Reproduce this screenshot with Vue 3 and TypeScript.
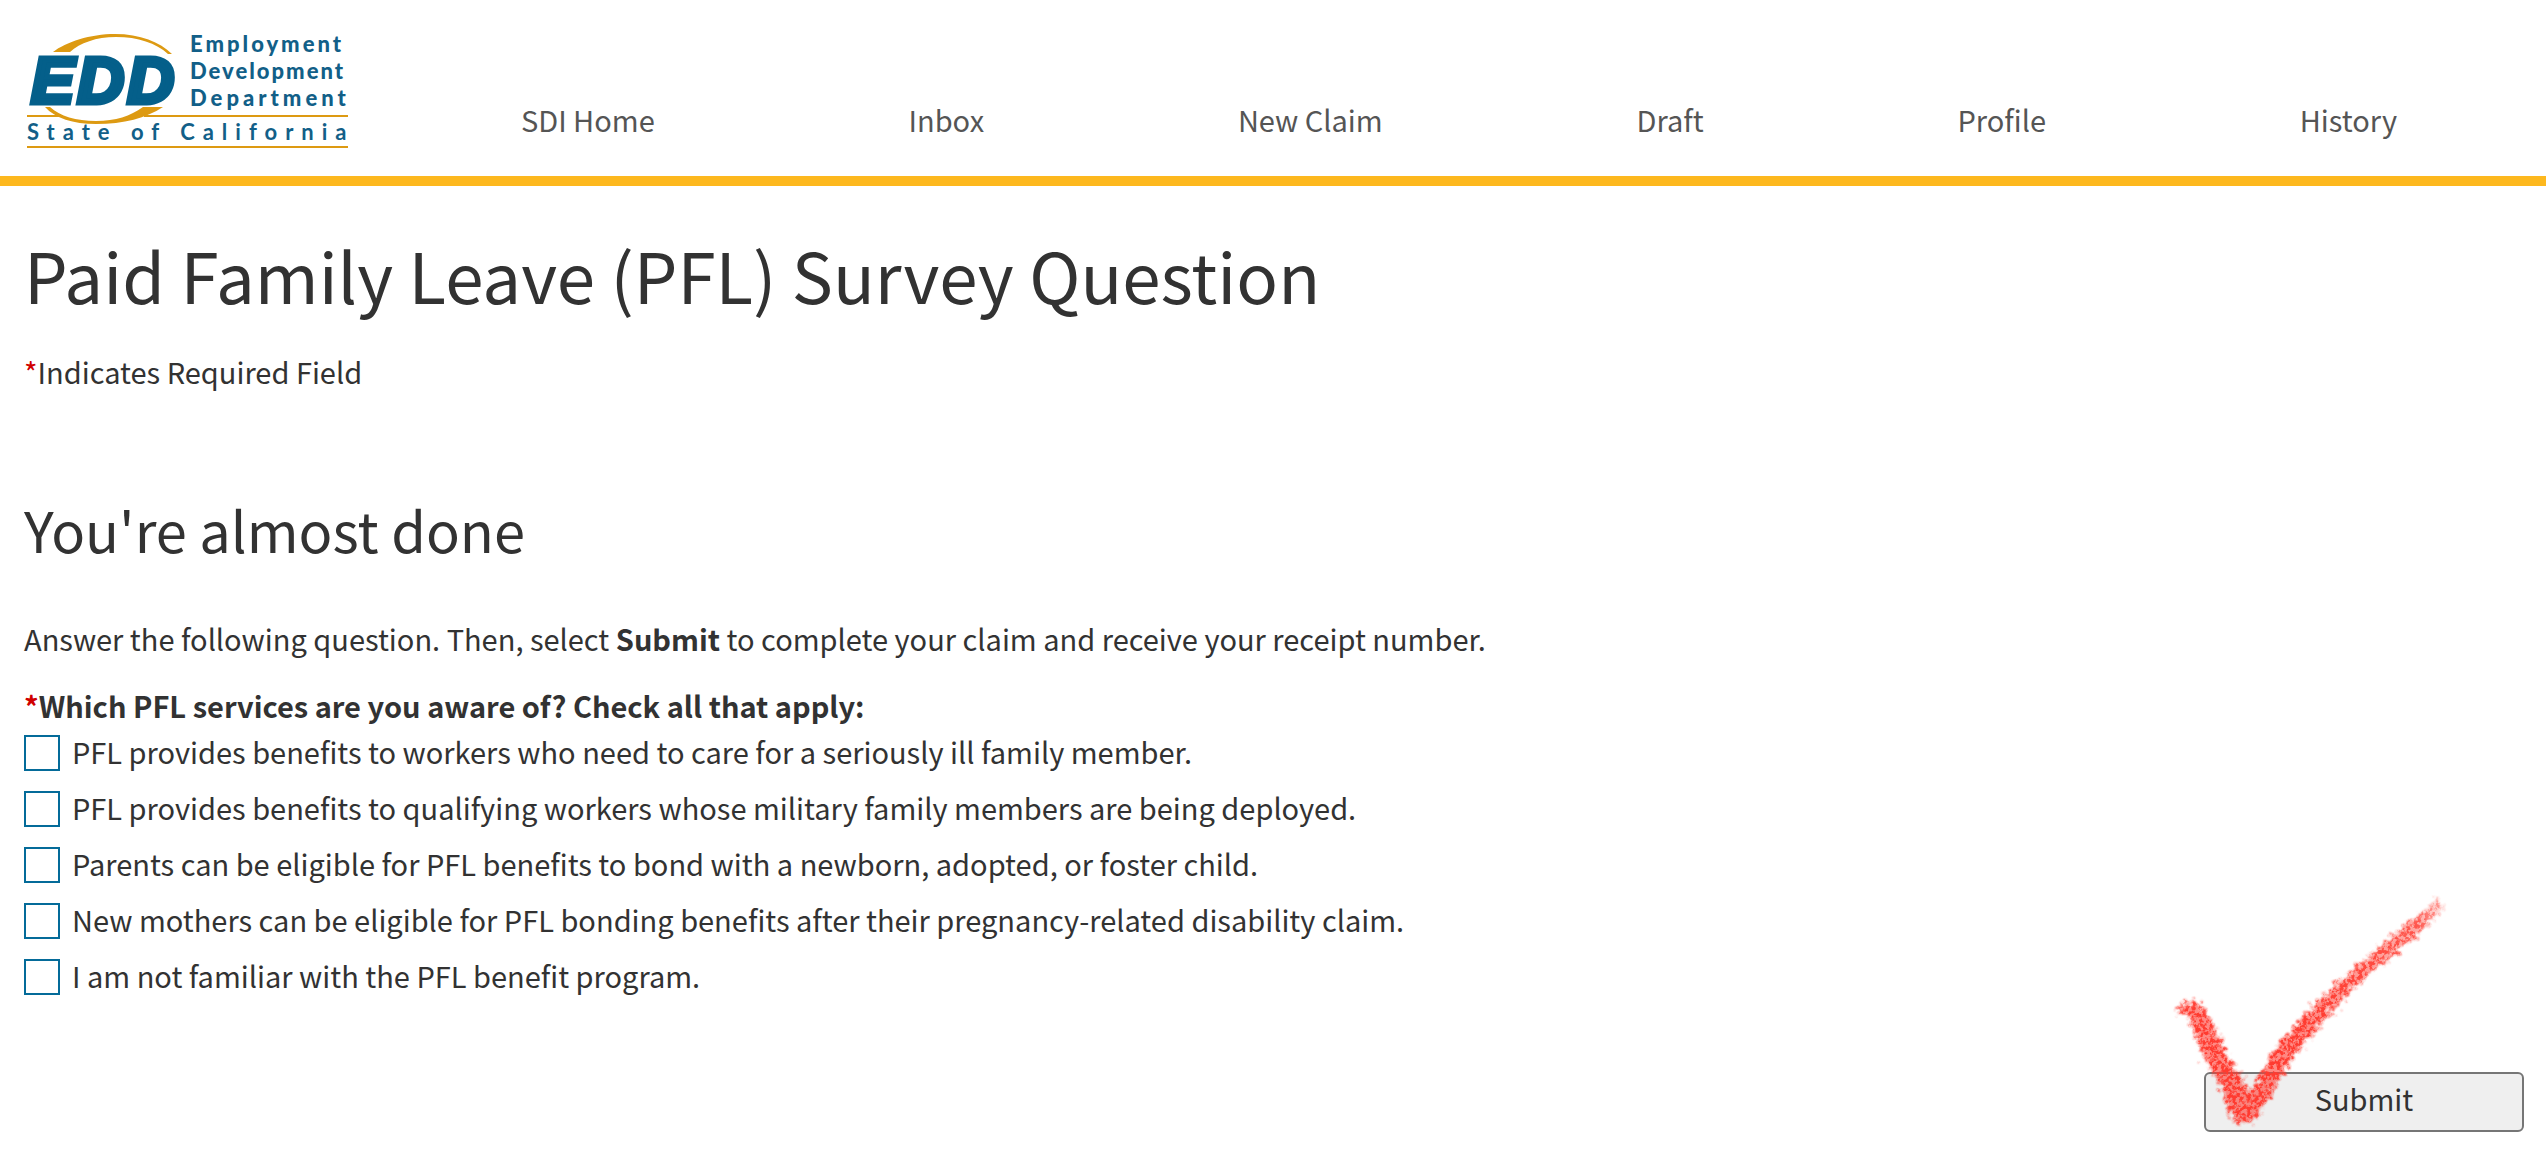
<script setup lang="ts">
import { ref } from 'vue'

const navItems: string[] = ['SDI Home', 'Inbox', 'New Claim', 'Draft', 'Profile', 'History']

const options: string[] = [
  'PFL provides benefits to workers who need to care for a seriously ill family member.',
  'PFL provides benefits to qualifying workers whose military family members are being deployed.',
  'Parents can be eligible for PFL benefits to bond with a newborn, adopted, or foster child.',
  'New mothers can be eligible for PFL bonding benefits after their pregnancy-related disability claim.',
  'I am not familiar with the PFL benefit program.',
]

const selected = ref<number[]>([])
</script>

<template>
  <div class="page">
    <header class="header">
      <a class="logo" href="#" aria-label="Employment Development Department, State of California">
        <svg viewBox="24 30 344 122" width="344" height="122">
          <g class="gold">
            <path d="M53 52 C66 42 90 34 115 34 C140 34 160 42 172 54 L168 54 C156 43 138 37 116 37 C96 37 80 43 70 52 Z" />
            <path d="M45 107 C55 118 73 124 96 124 C124 124 146 118 163 107 L143 107 C130 116 116 121 96 121 C76 121 60 116 50 107 Z" />
            <rect x="27" y="115" width="35" height="2" />
            <rect x="144" y="115" width="204" height="2" />
            <rect x="27" y="146" width="321" height="2" />
          </g>
          <text class="edd" x="31" y="103">EDD</text>
          <g class="name">
            <text class="employment" x="190" y="52">Employment</text>
            <text class="development" x="190" y="79">Development</text>
            <text class="department" x="190" y="106">Department</text>
            <text class="state" x="27" y="140">State of California</text>
          </g>
        </svg>
      </a>
      <nav class="nav" aria-label="Main">
        <a v-for="item in navItems" :key="item" href="#">{{ item }}</a>
      </nav>
    </header>

    <main class="main">
      <h1>Paid Family Leave (PFL) Survey Question</h1>
      <p class="required"><span class="star">*</span>Indicates Required Field</p>
      <h2>You're almost done</h2>
      <form @submit.prevent>
        <p class="intro">
          Answer the following question. Then, select <strong>Submit</strong> to complete your claim and receive your receipt number.
        </p>
        <fieldset>
          <legend><span class="star">*</span>Which PFL services are you aware of? Check all that apply:</legend>
          <div class="options">
            <label v-for="(option, i) in options" :key="i" class="option" :for="`option-${i}`">
              <input :id="`option-${i}`" v-model="selected" type="checkbox" :value="i" />
              <span>{{ option }}</span>
            </label>
          </div>
        </fieldset>
        <div class="actions">
          <div class="submit-wrap">
            <button type="submit">Submit</button>
            <svg class="tick" viewBox="90 45 840 705" width="280" height="235" aria-hidden="true">
              <defs>
                <filter id="crayon" x="-5%" y="-5%" width="110%" height="110%" color-interpolation-filters="sRGB">
                  <feTurbulence type="fractalNoise" baseFrequency="0.07" numOctaves="3" seed="4" result="edge" />
                  <feDisplacementMap in="SourceGraphic" in2="edge" scale="56" xChannelSelector="R" yChannelSelector="G" result="moved" />
                  <feGaussianBlur in="moved" stdDeviation="3" result="rough" />
                  <feTurbulence type="fractalNoise" baseFrequency="0.09" numOctaves="3" seed="9" result="grain" />
                  <feColorMatrix in="grain" type="matrix" values="0 0 0 0 0  0 0 0 0 0  0 0 0 0 0  5 0 0 0 -2" result="mask" />
                  <feComposite in="rough" in2="mask" operator="in" result="speckled" />
                  <feComponentTransfer in="rough" result="base"><feFuncA type="linear" slope="0.6" /></feComponentTransfer>
                  <feMerge><feMergeNode in="base" /><feMergeNode in="speckled" /></feMerge>
                </filter>
                <linearGradient id="fade" gradientUnits="userSpaceOnUse" x1="480" y1="440" x2="910" y2="65">
                  <stop offset="0" stop-color="#ff3b30" />
                  <stop offset="0.8" stop-color="#ff3b30" stop-opacity="0.75" />
                  <stop offset="1" stop-color="#ff3b30" stop-opacity="0.3" />
                </linearGradient>
              </defs>
              <path
                filter="url(#crayon)"
                fill="url(#fade)"
                d="M108 402 C115 380 130 362 155 365 C185 370 205 395 215 425 C235 485 265 530 300 585 L328 640 C355 600 380 550 425 480 C470 430 530 370 590 310 C650 260 720 200 790 140 L890 60 L914 82 L845 150 C775 212 705 268 645 320 C585 380 525 448 470 520 C435 565 405 615 380 665 C362 705 340 724 295 732 C265 690 248 660 245 615 C220 570 190 540 180 500 C168 460 160 430 140 408 Z"
              />
            </svg>
          </div>
        </div>
      </form>
    </main>
  </div>
</template>

<style>
body {
  background: #fff;
}
</style>

<style scoped>
.page {
  font-family: 'Noto Sans CJK SC', 'Noto Sans', sans-serif;
  font-size: 29px;
  line-height: 36px;
  color: #323232;
}

.header {
  display: flex;
  align-items: flex-end;
  gap: 26px;
  padding: 30px 22px 24px 24px;
  border-bottom: 10px solid #fdb81e;
}

.logo {
  flex: none;
}

.logo svg {
  display: block;
}

.gold {
  fill: #dd9a12;
}

.edd {
  font-family: 'Liberation Sans', Arial, sans-serif;
  font-size: 65px;
  font-weight: 700;
  font-style: italic;
  fill: #045f8a;
  stroke: #045f8a;
  stroke-width: 5px;
  letter-spacing: 3px;
}

.name {
  font-family: Lato, sans-serif;
  font-size: 22px;
  font-weight: 900;
  fill: #125f88;
}

.employment {
  letter-spacing: 3px;
}

.development {
  letter-spacing: 2px;
}

.department {
  letter-spacing: 4px;
}

.state {
  font-weight: 700;
  letter-spacing: 8px;
}

.nav {
  flex: 1;
  display: flex;
  justify-content: space-around;
  padding-bottom: 15px;
}

.nav a {
  color: #555;
  text-decoration: none;
}

.main {
  padding: 44px 22px 34px 24px;
}

h1,
h2,
p {
  margin: 0;
  font-weight: 400;
}

h1 {
  font-size: 69px;
  line-height: 88px;
}

.required {
  margin-top: 35px;
}

.star {
  color: #d00000;
}

h2 {
  margin-top: 104px;
  font-size: 56px;
  line-height: 72px;
}

.intro {
  margin-top: 55px;
}

strong,
legend {
  font-weight: 700;
}

fieldset {
  margin: 31px 0 0;
  padding: 0;
  border: 0;
}

legend {
  padding: 0;
}

.options {
  display: flex;
  flex-direction: column;
  align-items: flex-start;
  gap: 20px;
  margin-top: 12px;
}

.option {
  display: flex;
  gap: 12px;
  line-height: 32px;
}

.option input {
  appearance: none;
  flex: none;
  box-sizing: border-box;
  width: 36px;
  height: 36px;
  margin: 0;
  border: 2px solid #046b99;
  background: #fff;
}

.option input:checked {
  background: #046b99;
}

.actions {
  display: flex;
  justify-content: flex-end;
  margin-top: 77px;
}

.submit-wrap {
  position: relative;
}

button {
  display: block;
  box-sizing: border-box;
  width: 320px;
  height: 60px;
  padding: 0 0 8px;
  border: 2px solid #767676;
  border-radius: 6px;
  background: #efefef;
  color: #323232;
  font: inherit;
}

.tick {
  position: absolute;
  left: -34px;
  top: -177px;
  pointer-events: none;
}
</style>
